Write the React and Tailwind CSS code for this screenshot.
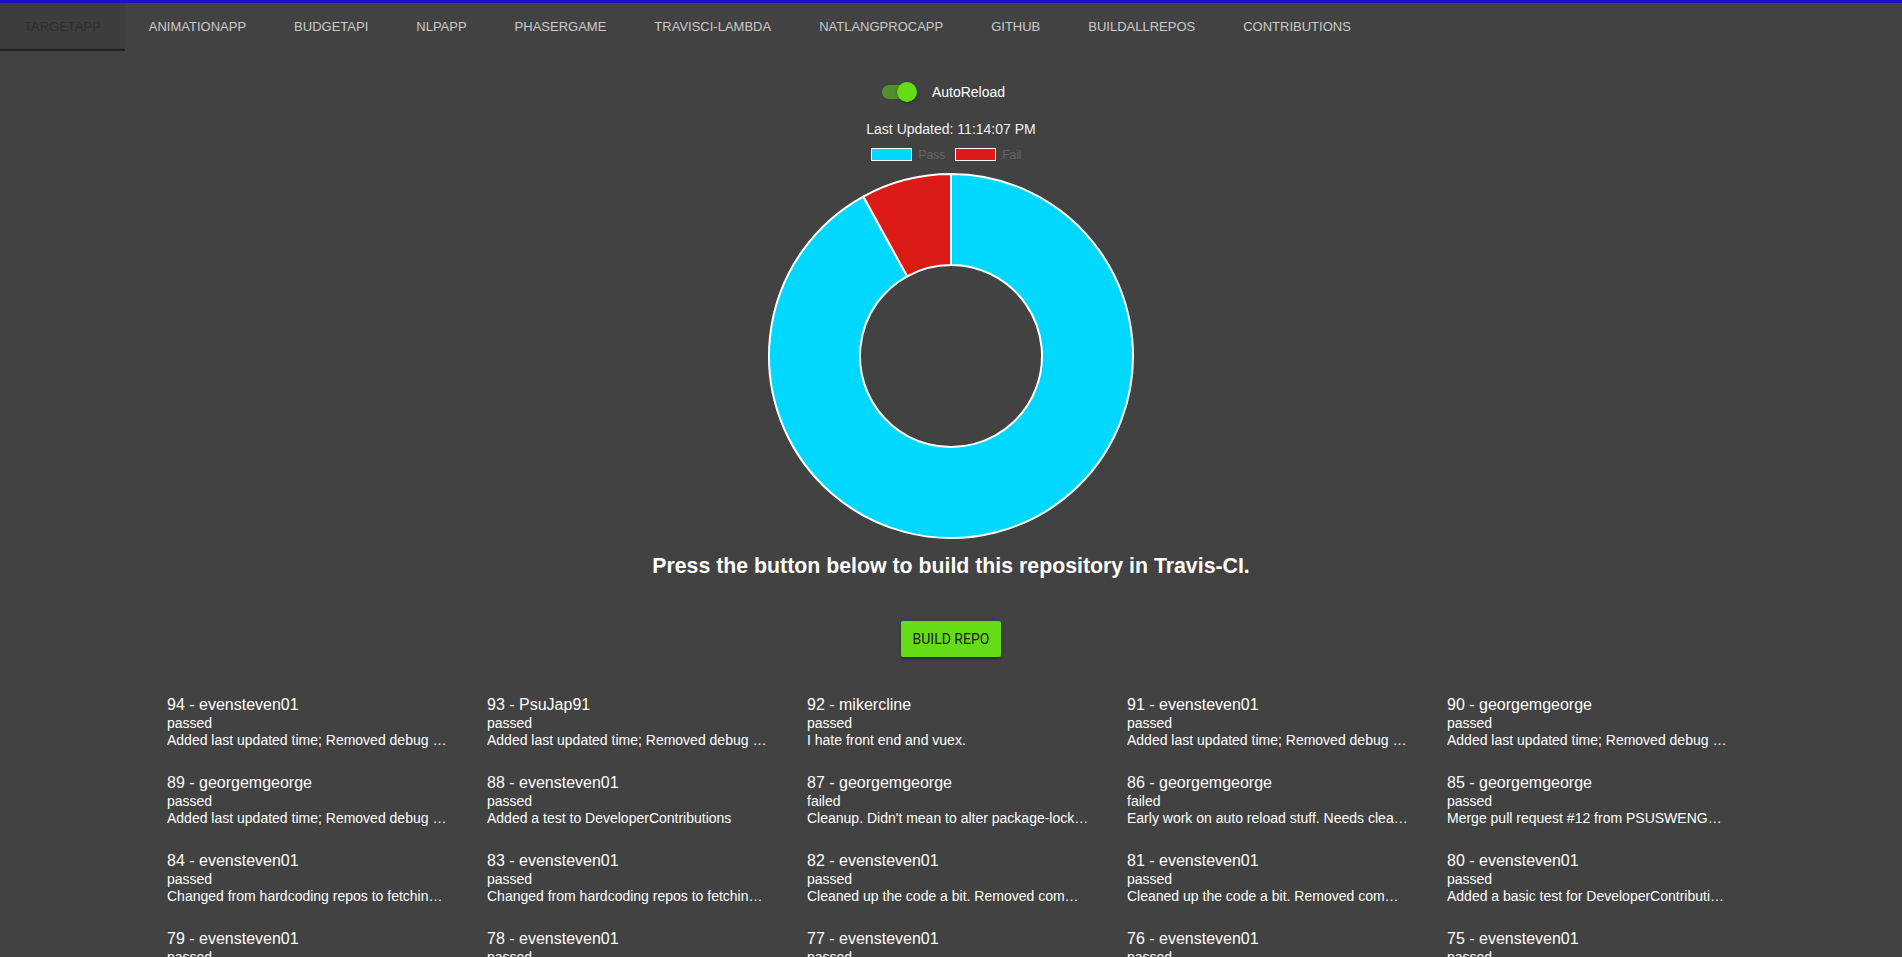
import React, { useState } from 'react';

const tabs = [
  'TargetApp',
  'AnimationApp',
  'BudgetApi',
  'NLPApp',
  'PhaserGame',
  'TravisCI-Lambda',
  'NatLangProcApp',
  'GitHub',
  'BuildAllRepos',
  'Contributions',
];

const debugMsg = 'Added last updated time; Removed debug statements';
const fetchMsg = 'Changed from hardcoding repos to fetching them from the API';
const cleanMsg = 'Cleaned up the code a bit. Removed comments and logs';

const builds = [
  { id: 94, user: 'evensteven01', state: 'passed', msg: debugMsg },
  { id: 93, user: 'PsuJap91', state: 'passed', msg: debugMsg },
  { id: 92, user: 'mikercline', state: 'passed', msg: 'I hate front end and vuex.' },
  { id: 91, user: 'evensteven01', state: 'passed', msg: debugMsg },
  { id: 90, user: 'georgemgeorge', state: 'passed', msg: debugMsg },
  { id: 89, user: 'georgemgeorge', state: 'passed', msg: debugMsg },
  { id: 88, user: 'evensteven01', state: 'passed', msg: 'Added a test to DeveloperContributions' },
  { id: 87, user: 'georgemgeorge', state: 'failed', msg: "Cleanup. Didn't mean to alter package-lock.json" },
  { id: 86, user: 'georgemgeorge', state: 'failed', msg: 'Early work on auto reload stuff. Needs cleanup' },
  { id: 85, user: 'georgemgeorge', state: 'passed', msg: 'Merge pull request #12 from PSUSWENG894/auto-reload' },
  { id: 84, user: 'evensteven01', state: 'passed', msg: fetchMsg },
  { id: 83, user: 'evensteven01', state: 'passed', msg: fetchMsg },
  { id: 82, user: 'evensteven01', state: 'passed', msg: cleanMsg },
  { id: 81, user: 'evensteven01', state: 'passed', msg: cleanMsg },
  { id: 80, user: 'evensteven01', state: 'passed', msg: 'Added a basic test for DeveloperContributions page' },
  { id: 79, user: 'evensteven01', state: 'passed', msg: 'Added the contributions tab' },
  { id: 78, user: 'evensteven01', state: 'passed', msg: 'Fixed the chart colours' },
  { id: 77, user: 'evensteven01', state: 'passed', msg: 'Added build button' },
  { id: 76, user: 'evensteven01', state: 'passed', msg: 'Hooked up the lambda endpoint' },
  { id: 75, user: 'evensteven01', state: 'passed', msg: 'Initial travis view' },
];

// point on a circle, angle in degrees clockwise from 12 o'clock
const pt = (c, r, deg) => {
  const a = (deg * Math.PI) / 180;
  return [c + r * Math.sin(a), c - r * Math.cos(a)];
};

const arcPath = (c, R, r, from, to) => {
  const [x1, y1] = pt(c, R, from);
  const [x2, y2] = pt(c, R, to);
  const [x3, y3] = pt(c, r, to);
  const [x4, y4] = pt(c, r, from);
  const large = to - from > 180 ? 1 : 0;
  return `M ${x1} ${y1} A ${R} ${R} 0 ${large} 1 ${x2} ${y2} L ${x3} ${y3} A ${r} ${r} 0 ${large} 0 ${x4} ${y4} Z`;
};

const Doughnut = ({ pass, fail }) => {
  const total = pass + fail;
  const passDeg = (pass / total) * 360;
  return (
    <svg width="370" height="370" viewBox="0 0 370 370">
      <path d={arcPath(185, 182, 91, 0, passDeg)} fill="#00D8FF" stroke="#fff" strokeWidth="2" />
      <path d={arcPath(185, 182, 91, passDeg, 360)} fill="#DD1B16" stroke="#fff" strokeWidth="2" />
    </svg>
  );
};

const App = () => {
  const [active, setActive] = useState(0);
  const [autoReload, setAutoReload] = useState(true);

  return (
    <div className="min-h-screen bg-[#424242] font-['Liberation_Sans',Arial,sans-serif] text-white">
      <div className="h-[3px] bg-[#1a10c9]" />

      {/* Tabs */}
      <div className="flex h-[48px] text-[13px]">
        {tabs.map((t, i) => (
          <button
            key={t}
            onClick={() => setActive(i)}
            className={`h-full px-6 flex items-center uppercase ${i === active ? 'bg-[#3d3d3d] text-[#2e2e2e] border-b-2 border-[#222] pt-[2px]' : 'text-[#cacaca]'}`}
          >
            {t}
          </button>
        ))}
      </div>

      <div className="flex flex-col items-center">
        {/* AutoReload switch */}
        <div className="mt-[29px] h-[24px] flex items-center pr-[15px]">
          <button onClick={() => setAutoReload(!autoReload)} className="relative w-[35px] h-[24px] flex items-center">
            <span className={`block w-[34px] h-[14px] rounded-full ${autoReload ? 'bg-[#538f2c]' : 'bg-[#777]'}`} />
            <span
              className={`absolute top-[2px] w-[20px] h-[20px] rounded-full shadow-[0_1px_3px_rgba(0,0,0,0.4)] ${autoReload ? 'left-[15px] bg-[#64dd17]' : 'left-0 bg-[#bdbdbd]'}`}
            />
          </button>
          <span className="ml-[15px] text-[14px] leading-[20px]">AutoReload</span>
        </div>

        <div className="mt-[15px] text-[14px] leading-[20px] text-[#f2f2f2]">Last Updated: 11:14:07 PM</div>

        {/* Legend */}
        <div className="mt-[9px] h-[13px] flex items-center pl-[1px] pr-[10px] text-[12px] leading-[12px] text-[#666]">
          <span className="w-[41px] h-[13px] bg-[#00D8FF] border border-white" />
          <span className="ml-[6px]">Pass</span>
          <span className="ml-[10px] w-[41px] h-[13px] bg-[#DD1B16] border border-white" />
          <span className="ml-[6px]">Fail</span>
        </div>

        <div className="mt-[10px]">
          <Doughnut pass={23} fail={2} />
        </div>

        <h3 className="mt-[10px] text-[21.3px] leading-[30px] font-bold">
          Press the button below to build this repository in Travis-CI.
        </h3>

        <button className="mt-[40px] w-[100px] h-[36px] rounded-[2px] bg-[#64dd17] text-[#1b1b1b] font-['Roboto',sans-serif] text-[14px] uppercase shadow-[0_3px_1px_-2px_rgba(0,0,0,0.2),0_2px_2px_0_rgba(0,0,0,0.14),0_1px_5px_0_rgba(0,0,0,0.12)]">
          Build Repo
        </button>

        {/* Build list */}
        <div className="mt-[38px] w-[1600px] grid grid-cols-5 gap-y-[24px]">
          {builds.map((b) => (
            <div key={b.id} className="px-4 min-w-0">
              <div className="text-[16px] leading-[20px]">
                {b.id} - {b.user}
              </div>
              <div className="text-[14px] leading-[17px]">{b.state}</div>
              <div className="w-[282px] text-[14px] leading-[17px] truncate">{b.msg}</div>
            </div>
          ))}
        </div>
      </div>
    </div>
  );
};

export default App;
